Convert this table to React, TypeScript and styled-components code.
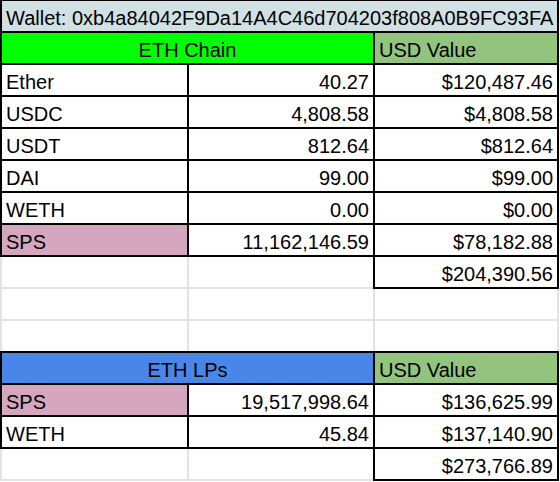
import React from 'react';
import styled, { createGlobalStyle } from 'styled-components';

const Global = createGlobalStyle`
  html, body { margin: 0; padding: 0; background: #ffffff; }
  body { font-family: "Liberation Sans", Arial, sans-serif; }
`;

const Sheet = styled.div`
  display: grid;
  grid-template-columns: 185px 184px 182px;
  grid-auto-rows: 30px;
  gap: 2px;
  padding: 2px;
  width: max-content;
  margin-top: -1px;
  background: #e2e3e3;
`;

type Align = 'left' | 'right' | 'center';

const Cell = styled.div<{ $span?: number; $bg?: string; $align?: Align; $boxed?: boolean }>`
  grid-column: span ${(p) => p.$span ?? 1};
  background: ${(p) => p.$bg ?? '#ffffff'};
  display: flex;
  align-items: flex-end;
  justify-content: ${(p) =>
    p.$align === 'right' ? 'flex-end' : p.$align === 'center' ? 'center' : 'flex-start'};
  padding: 0 4px 1px 4px;
  font-size: 20px;
  line-height: 23px;
  color: #000000;
  white-space: nowrap;
  outline: ${(p) => (p.$boxed ? '2px solid #000000' : 'none')};
`;

const PINK = '#d5a6bd';

type Asset = { name: string; amount: string; usd: string; highlight?: boolean };

const chain: Asset[] = [
  { name: 'Ether', amount: '40.27', usd: '$120,487.46' },
  { name: 'USDC', amount: '4,808.58', usd: '$4,808.58' },
  { name: 'USDT', amount: '812.64', usd: '$812.64' },
  { name: 'DAI', amount: '99.00', usd: '$99.00' },
  { name: 'WETH', amount: '0.00', usd: '$0.00' },
  { name: 'SPS', amount: '11,162,146.59', usd: '$78,182.88', highlight: true },
];

const lps: Asset[] = [
  { name: 'SPS', amount: '19,517,998.64', usd: '$136,625.99', highlight: true },
  { name: 'WETH', amount: '45.84', usd: '$137,140.90' },
];

const Section: React.FC<{ title: string; color: string; assets: Asset[]; total: string }> = ({
  title,
  color,
  assets,
  total,
}) => (
  <>
    <Cell $span={2} $bg={color} $align="center" $boxed>
      {title}
    </Cell>
    <Cell $bg="#93c47d" $boxed>
      USD Value
    </Cell>
    {assets.map((a) => (
      <React.Fragment key={title + a.name}>
        <Cell $bg={a.highlight ? PINK : undefined} $boxed>
          {a.name}
        </Cell>
        <Cell $align="right" $boxed>
          {a.amount}
        </Cell>
        <Cell $align="right" $boxed>
          {a.usd}
        </Cell>
      </React.Fragment>
    ))}
    <Cell />
    <Cell />
    <Cell $align="right" $boxed>
      {total}
    </Cell>
  </>
);

export default function App() {
  return (
    <>
      <Global />
      <Sheet>
        <Cell $span={3} $bg="#d0e0e3" $boxed>
          Wallet: 0xb4a84042F9Da14A4C46d704203f808A0B9FC93FA
        </Cell>
        <Section title="ETH Chain" color="#00ff00" assets={chain} total="$204,390.56" />
        <Cell />
        <Cell />
        <Cell />
        <Cell />
        <Cell />
        <Cell />
        <Section title="ETH LPs" color="#4a86e8" assets={lps} total="$273,766.89" />
      </Sheet>
    </>
  );
}
